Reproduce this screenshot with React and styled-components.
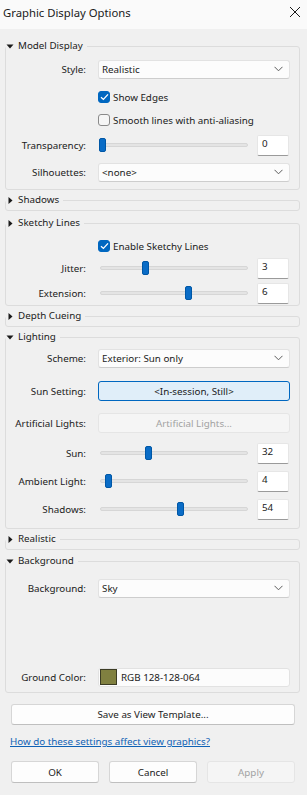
import React from "react"
import styled, { createGlobalStyle } from "styled-components"

const GlobalStyle = createGlobalStyle`
  html, body {
    margin: 0;
    padding: 0;
    background: #f0f0f0;
  }
  body {
    font-family: "Noto Sans", "Open Sans", sans-serif;
    font-size: 9.8px;
    color: #1b1b1b;
  }
`

const Dialog = styled.div`
  width: 307px;
  height: 795px;
  background: #f0f0f0;
  display: flex;
  flex-direction: column;
  overflow: hidden;
`

const TitleBar = styled.div`
  flex: none;
  height: 29px;
  box-sizing: border-box;
  padding: 0 6px 5px 3px;
  display: flex;
  align-items: center;
  justify-content: space-between;
  background: #fafafa;
  font-size: 11.3px;
  color: #1a1a1a;
`

const Sections = styled.div`
  padding: 9px 7px 0 5px;
  display: flex;
  flex-direction: column;
`

const Group = styled.fieldset`
  margin: ${p => p.$mt ?? 2}px 0 0;
  padding: 0 9px ${p => p.$pb ?? 2}px 0;
  border: 1px solid #dcdcdc;
  border-radius: 3px;
  min-width: 0;
  display: flex;
  flex-direction: column;
`

const Legend = styled.legend`
  display: flex;
  align-items: center;
  gap: 3px;
  height: 16px;
  padding: 0 4px 0 0;
  margin: 0;
  font-size: 9.8px;
  line-height: 16px;
`

const Row = styled.div`
  display: grid;
  grid-template-columns: 80px 1fr;
  column-gap: 12px;
  align-items: center;
  height: ${p => p.$h ?? 24}px;
  margin-top: ${p => p.$mt ?? 0}px;
`

const Label = styled.div`
  text-align: right;
  white-space: nowrap;
  font-size: 9.8px;
`

const Select = styled.div`
  height: 19px;
  box-sizing: border-box;
  display: flex;
  align-items: center;
  justify-content: space-between;
  padding: 0 6px 0 3px;
  background: #fcfcfc;
  border: 1px solid #e2e2e2;
  border-bottom-color: #cdcdcd;
  border-radius: 3px;
  font-size: 9.8px;
`

const Check = styled.label`
  display: flex;
  align-items: center;
  gap: 3px;
  font-size: 9.8px;
  white-space: nowrap;
`

const Box = styled.span`
  width: 12px;
  height: 12px;
  box-sizing: border-box;
  border-radius: 3px;
  display: flex;
  align-items: center;
  justify-content: center;
  background: ${p => (p.$on ? "#0067c0" : "#f6f6f6")};
  border: 1px solid ${p => (p.$on ? "#0067c0" : "#8a8a8a")};
`

const SliderLine = styled.div`
  display: flex;
  align-items: center;
  gap: 7px;
`

const Track = styled.div`
  position: relative;
  width: 152px;
  height: 14px;
  &::before {
    content: "";
    position: absolute;
    left: 2px;
    right: 2px;
    top: 5px;
    height: 4px;
    border-radius: 2px;
    background: #e4e4e4;
    border: 1px solid #d6d6d6;
    box-sizing: border-box;
  }
`

const Thumb = styled.span`
  position: absolute;
  top: 0;
  width: 7px;
  height: 14px;
  box-sizing: border-box;
  border-radius: 2px;
  background: #0a6cc6;
  border: 1px solid #0057a6;
`

const NumBox = styled.div`
  width: 32px;
  height: 21px;
  box-sizing: border-box;
  padding: 1px 0 0 4px;
  background: #ffffff;
  border: 1px solid #e6e6e6;
  border-bottom: 1px solid #9a9a9a;
  border-radius: 2px;
  font-size: 9.8px;
  line-height: 14px;
`

const Button = styled.div`
  height: ${p => p.$h ?? 20}px;
  box-sizing: border-box;
  display: flex;
  align-items: center;
  justify-content: center;
  border-radius: 3px;
  font-size: 9.8px;
  background: ${p => (p.$primary ? "#e0eef9" : p.$disabled ? "#f5f5f5" : "#fdfdfd")};
  border: 1px solid
    ${p => (p.$primary ? "#0067c0" : p.$disabled ? "#e5e5e5" : "#d6d6d6")};
  border-bottom-color: ${p =>
    p.$primary ? "#0067c0" : p.$disabled ? "#e5e5e5" : "#bfbfbf"};
  color: ${p => (p.$disabled ? "#a2a2a2" : "#1b1b1b")};
`

const ColorField = styled.div`
  height: 19px;
  box-sizing: border-box;
  display: flex;
  align-items: center;
  gap: 4px;
  padding: 0 0 0 1px;
  background: #fcfcfc;
  border: 1px solid #e2e2e2;
  border-radius: 3px;
  font-size: 9.8px;
`

const Swatch = styled.span`
  width: 17px;
  height: 16px;
  box-sizing: border-box;
  background: #808040;
  border: 1px solid #3c3c24;
`

const Footer = styled.div`
  padding: 11px 12px 0 11px;
  display: flex;
  flex-direction: column;
`

const HelpLink = styled.a`
  margin-top: 10px;
  margin-left: -1px;
  line-height: 14px;
  font-size: 9.8px;
  color: #0f62b5;
  text-decoration: underline;
`

const ButtonRow = styled.div`
  margin-top: 12px;
  display: grid;
  grid-template-columns: repeat(3, 1fr);
  column-gap: 10px;
`

const Caret = ({ open }) => (
  <svg width="9" height="9" viewBox="0 0 9 9">
    {open ? (
      <polygon points="0.5,2.5 7.5,2.5 4,6.5" fill="#1a1a1a" />
    ) : (
      <polygon points="2.5,1 6.5,4.5 2.5,8" fill="#1a1a1a" />
    )}
  </svg>
)

const Chevron = () => (
  <svg width="9" height="6" viewBox="0 0 9 6">
    <polyline points="0.5,0.8 4.5,4.8 8.5,0.8" fill="none" stroke="#5c5c5c" strokeWidth="1" />
  </svg>
)

const Tick = () => (
  <svg width="9" height="8" viewBox="0 0 9 8">
    <polyline points="1,4.2 3.4,6.4 8,1.4" fill="none" stroke="#ffffff" strokeWidth="1.3" />
  </svg>
)

const Close = () => (
  <svg width="12" height="12" viewBox="0 0 12 12">
    <path d="M1 1 L11 11 M11 1 L1 11" stroke="#1a1a1a" strokeWidth="1" />
  </svg>
)

const Section = ({ title, open, mt, pb, children }) => (
  <Group $mt={mt} $pb={pb}>
    <Legend>
      <Caret open={open} />
      {title}
    </Legend>
    {children}
  </Group>
)

const Dropdown = ({ value }) => (
  <Select>
    <span>{value}</span>
    <Chevron />
  </Select>
)

const CheckRow = ({ label, on, mt }) => (
  <Row $h={20} $mt={mt}>
    <span />
    <Check>
      <Box $on={on}>{on && <Tick />}</Box>
      {label}
    </Check>
  </Row>
)

const SliderRow = ({ label, value, max, mt }) => (
  <Row $mt={mt}>
    <Label>{label}</Label>
    <SliderLine>
      <Track>
        <Thumb style={{ left: 1 + Math.round((value / max) * 144) }} />
      </Track>
      <NumBox>{value}</NumBox>
    </SliderLine>
  </Row>
)

export default function App() {
  return (
    <Dialog>
      <GlobalStyle />
      <TitleBar>
        <span>Graphic Display Options</span>
        <Close />
      </TitleBar>

      <Sections>
        <Section title="Model Display" open mt={0} pb={5}>
          <Row $mt={3}>
            <Label>Style:</Label>
            <Dropdown value="Realistic" />
          </Row>
          <CheckRow label="Show Edges" on mt={6} />
          <CheckRow label="Smooth lines with anti-aliasing" mt={3} />
          <SliderRow label="Transparency:" value={0} max={100} mt={3} />
          <Row $mt={3}>
            <Label>Silhouettes:</Label>
            <Dropdown value="<none>" />
          </Row>
        </Section>

        <Section title="Shadows" pb={2} />

        <Section title="Sketchy Lines" mt={4} pb={0}>
          <CheckRow label="Enable Sketchy Lines" on mt={5} />
          <SliderRow label="Jitter:" value={3} max={10} mt={0} />
          <SliderRow label="Extension:" value={6} max={10} mt={1} />
        </Section>

        <Section title="Depth Cueing" pb={2} />

        <Section title="Lighting" open pb={7}>
          <Row $mt={1}>
            <Label>Scheme:</Label>
            <Dropdown value="Exterior: Sun only" />
          </Row>
          <Row $mt={9}>
            <Label>Sun Setting:</Label>
            <Button $primary>&lt;In-session, Still&gt;</Button>
          </Row>
          <Row $mt={8}>
            <Label>Artificial Lights:</Label>
            <Button $disabled>Artificial Lights...</Button>
          </Row>
          <SliderRow label="Sun:" value={32} max={100} mt={6} />
          <SliderRow label="Ambient Light:" value={4} max={100} mt={4} />
          <SliderRow label="Shadows:" value={54} max={100} mt={4} />
        </Section>

        <Section title="Realistic" pb={2} />

        <Section title="Background" open mt={3} pb={3}>
          <Row $mt={7}>
            <Label>Background:</Label>
            <Dropdown value="Sky" />
          </Row>
          <Row $mt={65}>
            <Label>Ground Color:</Label>
            <ColorField>
              <Swatch />
              RGB 128-128-064
            </ColorField>
          </Row>
        </Section>
      </Sections>

      <Footer>
        <Button $h={21}>Save as View Template...</Button>
        <HelpLink href="#">How do these settings affect view graphics?</HelpLink>
        <ButtonRow>
          <Button $h={22}>OK</Button>
          <Button $h={22}>Cancel</Button>
          <Button $h={22} $disabled>Apply</Button>
        </ButtonRow>
      </Footer>
    </Dialog>
  )
}
